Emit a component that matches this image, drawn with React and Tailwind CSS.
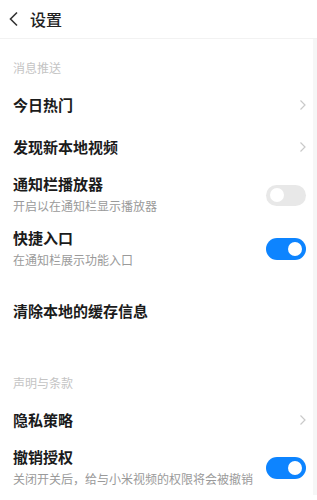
import React from 'react';

const font = { fontFamily: '"Noto Sans CJK SC", "Noto Sans", sans-serif' };

function Chevron() {
  return (
    <svg width="8" height="12" viewBox="0 0 8 12" className="shrink-0">
      <polyline points="1.5,1.5 6,6 1.5,10.5" fill="none" stroke="#c9c9c9" strokeWidth="1.2" />
    </svg>
  );
}

function Toggle({ on }) {
  return (
    <div
      className={
        on
          ? 'w-[40px] h-[22px] rounded-full bg-[#0d84ff] flex items-center justify-end px-[4px] shrink-0'
          : 'w-[40px] h-[21px] rounded-full bg-[#e8e8e8] flex items-center justify-start px-[4px] shrink-0'
      }
    >
      <div className="w-[14px] h-[14px] rounded-full bg-white" />
    </div>
  );
}

function SectionTitle({ text, h }) {
  return (
    <div className={`flex items-end pl-[13px] pb-[8px] ${h}`}>
      <span className="text-[12px] leading-[16px] text-[#c4c4c4]">{text}</span>
    </div>
  );
}

function LinkRow({ title }) {
  return (
    <div className="h-[42px] flex items-center justify-between pl-[13px] pr-[6px]">
      <span className="text-[15px] leading-[20px] font-bold text-[#1b1b1b]">{title}</span>
      <Chevron />
    </div>
  );
}

function ToggleRow({ title, sub, on }) {
  return (
    <div className="h-[54px] flex items-center justify-between pl-[13px] pr-[7px]">
      <div className="flex flex-col gap-[4px] pb-[2px]">
        <span className="text-[15px] leading-[20px] font-bold text-[#1b1b1b]">{title}</span>
        <span className="text-[12px] leading-[16px] text-[#9a9a9a] whitespace-nowrap">{sub}</span>
      </div>
      <Toggle on={on} />
    </div>
  );
}

export default function App() {
  return (
    <div className="w-[317px] h-[500px] bg-white overflow-hidden" style={font}>
      <header className="h-[39px] flex items-center gap-[11px] pl-[8px] border-b border-[#f2f2f2]">
        <svg width="11" height="16" viewBox="0 0 11 16">
          <polyline points="9,1.5 2.5,8 9,14.5" fill="none" stroke="#333" strokeWidth="1.6" />
        </svg>
        <span className="text-[16px] leading-[20px] text-[#222] font-medium">设置</span>
      </header>
      <div className="flex">
        <div className="flex-1 flex flex-col">
          <SectionTitle text="消息推送" h="h-[45px]" />
          <LinkRow title="今日热门" />
          <LinkRow title="发现新本地视频" />
          <ToggleRow title="通知栏播放器" sub="开启以在通知栏显示播放器" on={false} />
          <ToggleRow title="快捷入口" sub="在通知栏展示功能入口" on />
          <div className="h-[70px] flex items-center pl-[13px]">
            <span className="text-[15px] leading-[20px] font-bold text-[#1b1b1b]">清除本地的缓存信息</span>
          </div>
          <SectionTitle text="声明与条款" h="h-[53px]" />
          <LinkRow title="隐私策略" />
          <ToggleRow title="撤销授权" sub="关闭开关后，给与小米视频的权限将会被撤销" on />
        </div>
        <div className="w-[4px] bg-[#f6f6f6] self-stretch" />
      </div>
    </div>
  );
}
